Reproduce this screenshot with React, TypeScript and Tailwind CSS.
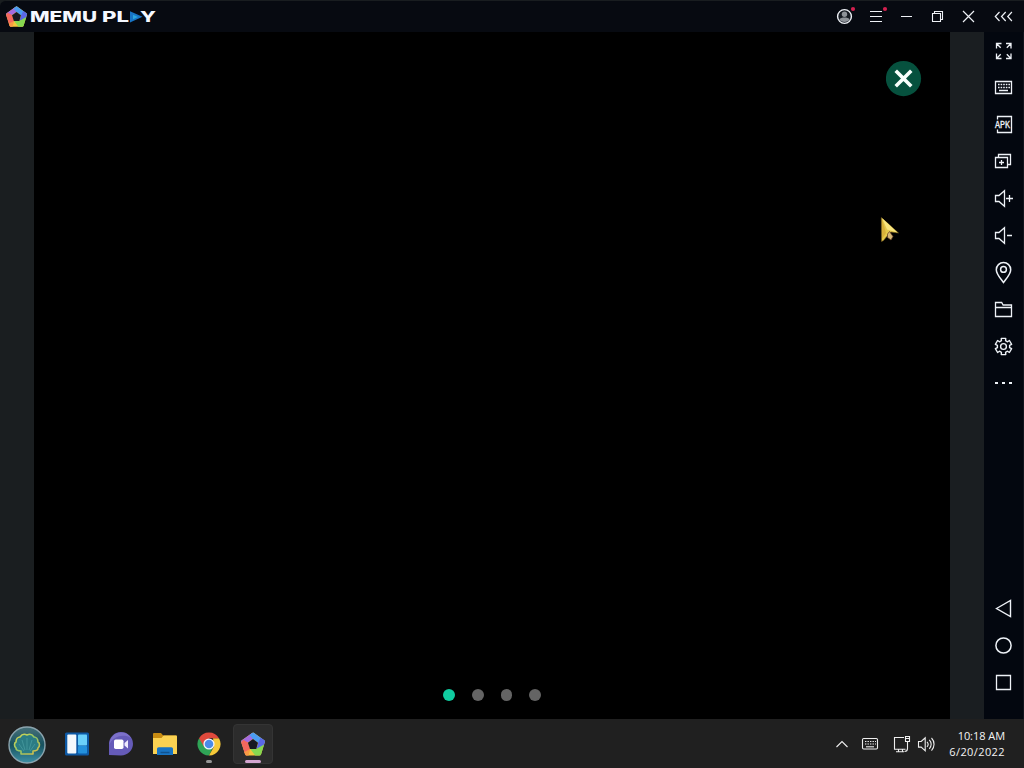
import React from 'react';

interface IconProps {
  children: React.ReactNode;
  label: string;
}

function SideIcon({ children, label }: IconProps) {
  return (
    <button type="button" aria-label={label} className="flex h-[37px] w-full shrink-0 items-center justify-center">
      <svg width="26" height="25" viewBox="0 0 26 25" fill="none" stroke="#eef2f7" strokeWidth="1.3">
        {children}
      </svg>
    </button>
  );
}

function Pentagon({ size }: { size: number }) {
  return (
    <svg width={size} height={size} viewBox="0 0 24 24" className="shrink-0">
      <path d="M11.2 1.8Q12 1 13 1.8L22.3 8.6Q23.2 9.3 22.9 10.3L19.4 21.6Q19 22.6 18 22.6H6.2Q5.2 22.6 4.8 21.6L1.1 10.3Q.8 9.3 1.7 8.6Z" fill="#f2c43c" />
      <path d="M11.2 1.8 1.7 8.6Q.8 9.3 1.1 10.3L7.3 10.5 12 7.3 15 5Z" fill="#a36be0" />
      <path d="M8.8 3.6 11.2 1.8Q12 1 13 1.8L22.3 8.6Q23.2 9.3 22.9 10.3L16.8 11 12 7.3Z" fill="#4b9cf0" />
      <path d="M19 6.2 22.3 8.6Q23.2 9.3 22.9 10.3L21.7 14 15 16.8 16.8 11Z" fill="#5a68e6" />
      <path d="M22.2 12.5 19.4 21.6Q19 22.6 18 22.6H14L9.5 16.6H15Z" fill="#86d850" />
      <path d="M1.1 10.3 4.8 21.6Q5.2 22.6 6.2 22.6L9.3 16.6 7.3 10.5 3 8Z" fill="#f4675e" />
      <path d="M4 19.3 4.8 21.6Q5.2 22.6 6.2 22.6H8L9.3 16.6Z" fill="#f89a45" />
      <path d="M12 7.3 16.6 10.8 15 16.6H9.2L7.3 10.8Z" fill="#171922" />
    </svg>
  );
}

// Six-toothed outline used by the settings button
const gearPath = (() => {
  const points: string[] = [];
  for (let i = 0; i < 6; i++) {
    const base = (i * Math.PI) / 3 - Math.PI / 2;
    [[-0.34, 6.2], [-0.27, 8.4], [0.27, 8.4], [0.34, 6.2]].forEach(([offset, r]) => {
      points.push(`${(12.5 + r * Math.cos(base + offset)).toFixed(2)} ${(11.5 + r * Math.sin(base + offset)).toFixed(2)}`);
    });
  }
  return `M${points.join('L')}Z`;
})();

function TitleBar() {
  return (
    <header className="flex h-8 shrink-0 items-center rounded-tl-md border-t border-[#191d20] bg-[#070a11] pl-[5px]">
      <Pentagon size={23} />
      <svg width="130" height="24" viewBox="0 -4 130 24" className="ml-[2px]" fontFamily="Inter, sans-serif" fontWeight="800" fontSize="15" fill="#f5f8ff">
        <text x="0" y="13.2" textLength="67" lengthAdjust="spacingAndGlyphs">MEMU</text>
        <text x="72" y="13.2" textLength="27" lengthAdjust="spacingAndGlyphs">PL</text>
        <path d="M100 2.3 112.5 7.8 100 13.5Z" fill="#1874c5" />
        <path d="m103 5.8 5 2.1-5 2.3Z" fill="#2aa6dd" />
        <text x="110" y="13.2" textLength="16" lengthAdjust="spacingAndGlyphs">Y</text>
      </svg>
      <div className="ml-auto flex items-center pb-px">
        <svg width="191" height="30" viewBox="833 1 191 30" fill="none" stroke="#eef1f6" strokeWidth="1.2">
          <circle cx="844.5" cy="16.5" r="6.9" strokeWidth="1.4" fill="#151a22" />
          <circle cx="844.5" cy="14.3" r="2.7" fill="#8d9298" stroke="none" />
          <path d="M839.3 19.5c1.5-2.6 8.9-2.6 10.4 0-1.6 3.3-8.8 3.3-10.4 0Z" fill="#8d9298" stroke="none" />
          <circle cx="853" cy="9" r="2.1" fill="#d3204f" stroke="none" />
          <path d="M870 11.5h12M870 16.5h12M870 21.5h12" strokeWidth="1" />
          <circle cx="885" cy="9" r="2.1" fill="#d3204f" stroke="none" />
          <path d="M901 16.5h11" strokeWidth="1" />
          <path d="M932.5 13.5h8v8h-8ZM934.5 13.5v-2h8v8h-2" strokeWidth="1.1" />
          <path d="m963 11 11 11m0-11-11 11" />
          <path d="m999.5 12-4.2 4.5 4.2 4.5m6.2-9-4.2 4.5 4.2 4.5m6.2-9-4.2 4.5 4.2 4.5" />
        </svg>
      </div>
    </header>
  );
}

function Sidebar() {
  return (
    <aside className="flex w-10 shrink-0 flex-col border-r border-[#10141c] bg-[#03070f] pt-px">
      <SideIcon label="Full screen">
        <path d="M5.5 9.5v-5h5M5.5 4.5l4.2 4.2M15 4.5h5v5M20 4.5l-4.2 4.2M5.5 14.5v5h5M5.5 19.5l4.2-4.2M15 19.5h5v-5M20 19.5l-4.2-4.2" />
      </SideIcon>
      <SideIcon label="Keyboard">
        <path d="M4.5 5.5h16v12h-16ZM8 14.5h9" />
        <path d="M7 8.5h12M7 11.5h12" strokeDasharray="1.6 1" />
      </SideIcon>
      <SideIcon label="Install APK">
        <path d="M6.5 6.5v-3h14v16h-14v-3" />
        <path d="M3 7.5h16v8H3Z" fill="#03070f" stroke="none" />
        <text x="4" y="14.8" textLength="15" lengthAdjust="spacingAndGlyphs" fontFamily="Liberation Mono, monospace" fontWeight="400" fontSize="10.5" fill="#eef2f7" stroke="#eef2f7" strokeWidth=".3">APK</text>
      </SideIcon>
      <SideIcon label="Multiple windows">
        <path d="M4.5 7.5h12v10h-12ZM8 12.5h5M10.5 10v5M7.5 7.5v-3h12v10h-3" />
      </SideIcon>
      <SideIcon label="Volume up">
        <path d="M4.5 8.5H8l5.5-4.8v15.6L8 14.5H4.5ZM15 11.5h7M18.5 8v7" />
      </SideIcon>
      <SideIcon label="Volume down">
        <path d="M4.5 8.5H8l5.5-4.8v15.6L8 14.5H4.5ZM16 11.5h5" />
      </SideIcon>
      <SideIcon label="Location">
        <path d="M12.5 21.5C9.5 17.4 5.3 13.1 5.3 8.7a7.2 7.2 0 0 1 14.4 0c0 4.4-4.2 8.7-7.2 12.8Z" strokeWidth="1.5" />
        <circle cx="12.5" cy="8.4" r="2.9" strokeWidth="1.5" />
      </SideIcon>
      <SideIcon label="Shared folder">
        <path d="M4.5 18.5v-14h6.2l1.4 2.5h8.4v11.5ZM4.5 9.5h16" />
      </SideIcon>
      <SideIcon label="Settings">
        <path d={gearPath} strokeWidth="1.4" strokeLinejoin="round" />
        <circle cx="12.5" cy="11.5" r="2.9" strokeWidth="1.4" />
      </SideIcon>
      <SideIcon label="More">
        <path d="M4 11h3M11 11h3M18 11h3" strokeWidth="2" />
      </SideIcon>
      <div className="mt-auto mb-[18px]">
        <SideIcon label="Back">
          <path d="M5.5 12.5 19.5 4.5v16Z" strokeWidth="1.4" />
        </SideIcon>
        <SideIcon label="Home">
          <circle cx="12.5" cy="12.5" r="7.6" strokeWidth="1.5" />
        </SideIcon>
        <SideIcon label="Recent apps">
          <path d="M5.5 5.5h14v14h-14Z" />
        </SideIcon>
      </div>
    </aside>
  );
}

function Screen() {
  return (
    <main className="relative flex-1 bg-black">
      <button type="button" aria-label="Close" className="absolute top-[29px] left-[852px]">
        <svg width="36" height="36" viewBox="0 0 36 36">
          <circle cx="17.5" cy="17.6" r="17.6" fill="#06513e" />
          <path d="m11 11 13 13m0-13-13 13" stroke="#f8fffc" strokeWidth="3.6" strokeLinecap="square" />
        </svg>
      </button>
      <svg width="20" height="27" viewBox="0 0 20 27" className="absolute top-[184px] left-[846px]">
        <path d="M1.3 1.5 18.5 17l-8-1-7 8.5-2 1Z" fill="#e5c84b" stroke="#6e561c" strokeWidth=".6" />
        <path d="M2 3v20l4-6Z" fill="#d8b03a" />
        <path d="m2 2 15.5 14.4-10.5-3Z" fill="#fae67e" />
        <path d="m7.5 18 2-2.5 3.5 5-2 3.5-3.5-2.5Z" fill="#d5b777" stroke="#633b21" strokeWidth=".7" />
      </svg>
      <div className="absolute bottom-[18px] left-[409px] flex items-center gap-[17px]">
        <span className="size-3 rounded-full bg-[#10cca0]" />
        <span className="size-[11.5px] rounded-full bg-[#646464]" />
        <span className="size-[11.5px] rounded-full bg-[#646464]" />
        <span className="size-[11.5px] rounded-full bg-[#646464]" />
      </div>
    </main>
  );
}

function Taskbar() {
  return (
    <footer className="flex h-[49px] shrink-0 items-center bg-[#202020] pl-2">
      <svg width="38" height="38" viewBox="0 0 38 38" className="mt-[2px]">
        <defs>
          <linearGradient id="orb" x1="0" y1="0" x2="0" y2="1">
            <stop offset="0" stopColor="#47717a" />
            <stop offset=".5" stopColor="#17515e" />
            <stop offset="1" stopColor="#3e91a6" />
          </linearGradient>
          <linearGradient id="shell" x1="0" y1="0" x2="1" y2="1">
            <stop offset="0" stopColor="#e0d94e" />
            <stop offset=".5" stopColor="#8fc468" />
            <stop offset="1" stopColor="#e3bd45" />
          </linearGradient>
        </defs>
        <circle cx="19" cy="19" r="18" fill="url(#orb)" stroke="#8ba4ae" strokeWidth="1.4" />
        <path d="M13 28v-3c-3 0-5-1-5-3-2-2-2-5 0-6 0-3 2-5 4-5 2-3 5-3 7-2 2-1 5-1 7 2 2 0 4 2 4 5 2 1 2 4 0 6 0 2-2 3-5 3v3Z" fill="#2b7c84" stroke="url(#shell)" strokeWidth="1.6" strokeLinejoin="round" />
        <path d="m16 25-5-7m6 6-3-10m5 10V12m2 12 3-10m-2 11 5-7" stroke="#489ba0" strokeWidth=".8" />
      </svg>
      <svg width="24" height="24" viewBox="0 0 24 24" className="mt-[1px] ml-[19px]">
        <rect width="24" height="23" y=".5" rx="1.5" fill="#0d59a5" />
        <rect x="2.3" y="2.5" width="9" height="19" rx="1" fill="#f4f8fc" />
        <rect x="13" y="2.5" width="9" height="11" rx=".8" fill="#6bd0fa" />
        <rect x="13" y="14" width="9" height="7.5" rx=".8" fill="#2491dc" />
      </svg>
      <svg width="24" height="24" viewBox="0 0 24 24" className="mt-[1px] ml-5">
        <path d="M0 23V12a12 11.7 0 1 1 12 11.5Z" fill="#655bb8" />
        <path d="M12 .6A11.5 11.5 0 0 0 .5 12 15 15 0 0 1 22 6 11.5 11.5 0 0 0 12 .6Z" fill="#7d71ca" />
        <rect x="5" y="7.5" width="9.5" height="9.5" rx="1.7" fill="#fff" />
        <path d="m15.5 11 3.5-3v8.5l-3.5-3Z" fill="#eeeafd" />
      </svg>
      <svg width="26" height="24" viewBox="0 0 26 24" className="mt-[1px] ml-[19px]">
        <path d="M1 22V2.2C1 1.5 1.5 1 2.2 1H9l2.2 2.5h12.5c.8 0 1.3.5 1.3 1.2V22Z" fill="#c88c12" />
        <path d="M1 6h8.5l2-2.5h12.2c.8 0 1.3.5 1.3 1.3V22H1Z" fill="#fbd252" />
        <path d="M5 23v-6c0-1 .7-1.7 1.7-1.7h12.6c1 0 1.7.7 1.7 1.7v6Z" fill="#1874c4" />
        <path d="M8.5 20.5h9" stroke="#10528f" strokeWidth="1.5" />
      </svg>
      <div className="ml-[11px] flex h-full w-[39px] flex-col items-center">
        <svg width="24" height="24" viewBox="0 0 24 24" className="mt-[13px]">
          <path d="M2.04 6.25A11.5 11.5 0 0 0 12 23.5l4.5-9L12 12Z" fill="#2fa456" />
          <path d="M21.96 6.25A11.5 11.5 0 0 1 12 23.5l5-9-1-8.25Z" fill="#f6c938" />
          <path d="M2.04 6.25A11.5 11.5 0 0 1 21.96 6.25H12L7 14.8Z" fill="#df493c" />
          <circle cx="12" cy="12" r="5.6" fill="#f4f6fa" />
          <circle cx="12" cy="12" r="4.3" fill="#4a8be8" />
        </svg>
        <span className="mt-[4px] h-[3px] w-1.5 rounded-full bg-[#969696]" />
      </div>
      <div className="ml-[5px] flex h-10 w-10 flex-col items-center rounded border border-[#343434] bg-[#2c2c2c]">
        <span className="mt-[6px]"><Pentagon size={26} /></span>
        <span className="mt-[3px] h-[3px] w-4 shrink-0 rounded-full bg-[#d4a5d0]" />
      </div>

      {/* System tray */}
      <svg width="101" height="24" viewBox="835 732 101 24" fill="none" stroke="#eeeeee" strokeWidth="1.1" className="ml-auto">
        <path d="m836.5 747 5.5-5.5 5.5 5.5" />
        <rect x="862.5" y="738.5" width="15" height="10.5" rx="1.2" />
        <path d="M865 741.5h11M865 744h11" strokeDasharray="1.4 1.1" />
        <path d="M866 746.8h8" />
        <path d="M904 737.5h-9.5v11.8h11M898.5 749.5v2.2m-2.5 0h8m-1.5-2.2v2.2" />
        <path d="M905.5 736.5h4v5h-4ZM905.5 738.5h4M907.5 741.5v7c0 2-1 3-3 3" />
        <path d="M918.5 741.5h2.7l4-3.7v13l-4-3.7h-2.7ZM927 741.8c1.4 1.5 1.4 3.5 0 5M929.3 739.8c2.5 2.6 2.5 6.4 0 9M931.5 738c3.4 3.5 3.4 9.1 0 12.6" />
      </svg>
      <div className="mr-[19px] ml-[11px] flex w-[58px] flex-col text-right font-['Open_Sans',sans-serif] text-[11px] leading-4 whitespace-nowrap text-[#f4f4f4]">
        <span className="tracking-[-0.05px]">10:18 AM</span>
        <span className="tracking-[0.4px]">6/20/2022</span>
      </div>
    </footer>
  );
}

export default function App() {
  return (
    <div className="flex h-screen w-screen flex-col overflow-hidden bg-[#1a1e20]">
      <TitleBar />
      <div className="flex min-h-0 flex-1">
        <div className="w-[34px] shrink-0 bg-[#1a1e20]" />
        <Screen />
        <div className="w-[34px] shrink-0 bg-[#1a1e21]" />
        <Sidebar />
      </div>
      <Taskbar />
    </div>
  );
}
